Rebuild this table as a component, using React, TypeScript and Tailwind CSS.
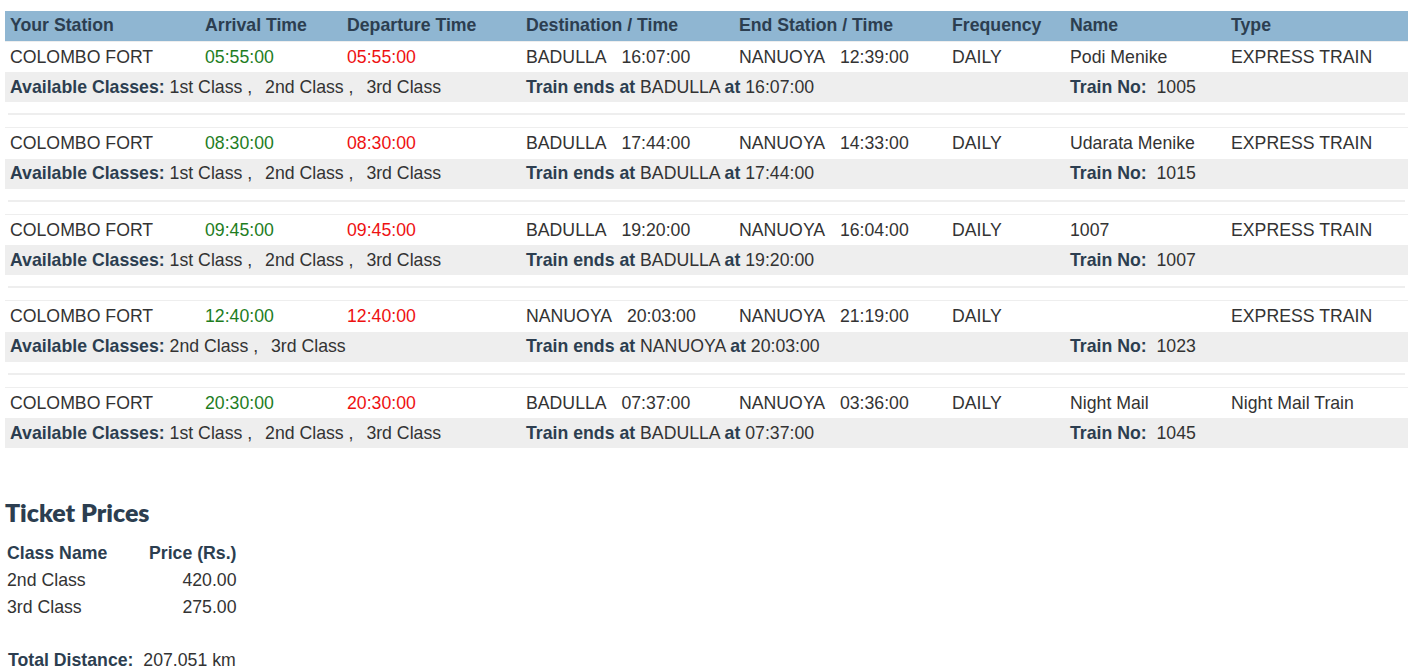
import React from "react";

type Train = {
  arrival: string;
  departure: string;
  dest: string;
  destTime: string;
  end: string;
  endTime: string;
  name: string;
  type: string;
  no: string;
  classes: string[];
};

const trains: Train[] = [
  {
    arrival: "05:55:00",
    departure: "05:55:00",
    dest: "BADULLA",
    destTime: "16:07:00",
    end: "NANUOYA",
    endTime: "12:39:00",
    name: "Podi Menike",
    type: "EXPRESS TRAIN",
    no: "1005",
    classes: ["1st Class", "2nd Class", "3rd Class"],
  },
  {
    arrival: "08:30:00",
    departure: "08:30:00",
    dest: "BADULLA",
    destTime: "17:44:00",
    end: "NANUOYA",
    endTime: "14:33:00",
    name: "Udarata Menike",
    type: "EXPRESS TRAIN",
    no: "1015",
    classes: ["1st Class", "2nd Class", "3rd Class"],
  },
  {
    arrival: "09:45:00",
    departure: "09:45:00",
    dest: "BADULLA",
    destTime: "19:20:00",
    end: "NANUOYA",
    endTime: "16:04:00",
    name: "1007",
    type: "EXPRESS TRAIN",
    no: "1007",
    classes: ["1st Class", "2nd Class", "3rd Class"],
  },
  {
    arrival: "12:40:00",
    departure: "12:40:00",
    dest: "NANUOYA",
    destTime: "20:03:00",
    end: "NANUOYA",
    endTime: "21:19:00",
    name: "",
    type: "EXPRESS TRAIN",
    no: "1023",
    classes: ["2nd Class", "3rd Class"],
  },
  {
    arrival: "20:30:00",
    departure: "20:30:00",
    dest: "BADULLA",
    destTime: "07:37:00",
    end: "NANUOYA",
    endTime: "03:36:00",
    name: "Night Mail",
    type: "Night Mail Train",
    no: "1045",
    classes: ["1st Class", "2nd Class", "3rd Class"],
  },
];

const headers = [
  "Your Station",
  "Arrival Time",
  "Departure Time",
  "Destination / Time",
  "End Station / Time",
  "Frequency",
  "Name",
  "Type",
];

const widths = [195, 142, 179, 213, 213, 118, 161, 182];

export default function App() {
  return (
    <div
      className="min-h-screen bg-white text-[#333] text-[17.7px]"
      style={{ fontFamily: '"Liberation Sans", Arial, sans-serif' }}
    >
      <table className="ml-[5px] mt-[11px] w-[1403px] table-fixed border-collapse">
        <colgroup>
          {widths.map((w, i) => (
            <col key={i} style={{ width: w }} />
          ))}
        </colgroup>
        <thead>
          <tr className="h-[30px] bg-[#8fb6d2]">
            {headers.map((h) => (
              <th
                key={h}
                className="px-[5px] text-left font-bold text-[#2c3e50] whitespace-nowrap"
              >
                {h}
              </th>
            ))}
          </tr>
        </thead>
        <tbody>
          {trains.map((t, i) => (
            <React.Fragment key={t.no}>
              <tr className="h-[31px] border-t border-[#eeeeee] whitespace-nowrap">
                <td className="px-[5px] pt-[1px]">COLOMBO FORT</td>
                <td className="px-[5px] pt-[1px] text-[#1e7d1e]">{t.arrival}</td>
                <td className="px-[5px] pt-[1px] text-[#ee1111]">{t.departure}</td>
                <td className="px-[5px] pt-[1px]">
                  {t.dest}&nbsp;&nbsp;&nbsp;{t.destTime}
                </td>
                <td className="px-[5px] pt-[1px]">
                  {t.end}&nbsp;&nbsp;&nbsp;{t.endTime}
                </td>
                <td className="px-[5px] pt-[1px]">DAILY</td>
                <td className="px-[5px] pt-[1px]">{t.name}</td>
                <td className="px-[5px] pt-[1px]">{t.type}</td>
              </tr>
              <tr className="h-[30px] bg-[#eeeeee] whitespace-nowrap">
                <td colSpan={3} className="px-[5px]">
                  <b className="text-[#2c3e50]">Available Classes:</b>{" "}
                  {t.classes.map((c, k) => (
                    <React.Fragment key={c}>
                      {k > 0 ? <span className="ml-[3px]">{"\u00a0\u00a0"}</span> : null}
                      {c}
                      {k < t.classes.length - 1 ? " ," : ""}
                    </React.Fragment>
                  ))}
                </td>
                <td colSpan={3} className="px-[5px]">
                  <b className="text-[#2c3e50]">Train ends at</b> {t.dest}{" "}
                  <b className="text-[#2c3e50]">at</b> {t.destTime}
                </td>
                <td colSpan={2} className="px-[5px]">
                  <b className="text-[#2c3e50]">Train No:</b>&nbsp; {t.no}
                </td>
              </tr>
              {i < trains.length - 1 ? (
                <tr className="h-[25px]">
                  <td colSpan={8} className="px-[3px] pt-[11px] pb-[12px]">
                    <div className="h-[2px] bg-[#eeeeee]" />
                  </td>
                </tr>
              ) : null}
            </React.Fragment>
          ))}
        </tbody>
      </table>

      <h2
        className="ml-[5px] mt-[49px] text-[25px] leading-[30px] font-extrabold text-[#2c3e50]"
        style={{ fontFamily: "Lato, sans-serif" }}
      >
        Ticket Prices
      </h2>

      <table className="ml-[5px] mt-[13px] border-collapse">
        <thead>
          <tr className="h-[27px]">
            <th className="w-[142px] px-[2px] text-left font-bold text-[#2c3e50]">
              Class Name
            </th>
            <th className="pl-[2px] pr-0 text-right font-bold text-[#2c3e50]">
              Price (Rs.)
            </th>
          </tr>
        </thead>
        <tbody>
          <tr className="h-[27px]">
            <td className="px-[2px]">2nd Class</td>
            <td className="pl-[2px] pr-0 text-right">420.00</td>
          </tr>
          <tr className="h-[27px]">
            <td className="px-[2px]">3rd Class</td>
            <td className="pl-[2px] pr-0 text-right">275.00</td>
          </tr>
        </tbody>
      </table>

      <p className="ml-[8px] mt-[26px] leading-[26px]">
        <b className="text-[#2c3e50]">Total Distance:</b>&nbsp; 207.051 km
      </p>
    </div>
  );
}
